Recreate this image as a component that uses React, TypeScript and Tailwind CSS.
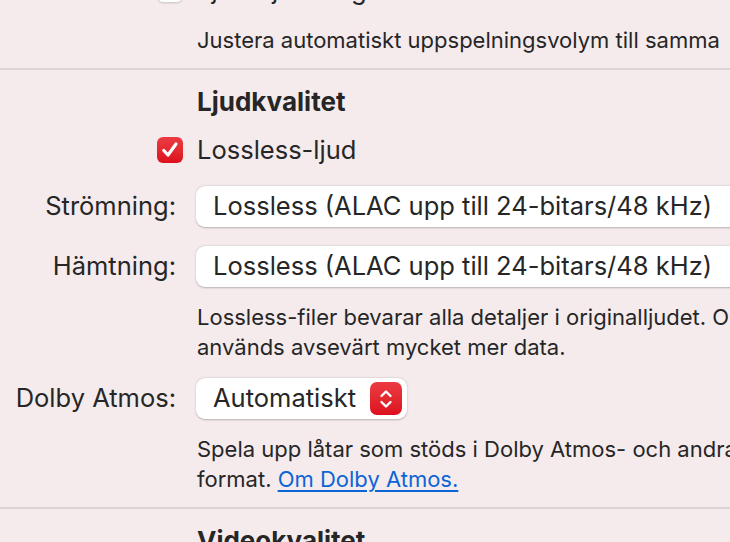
import React from 'react';

// Red macOS-style checkbox
const Checkbox: React.FC<{ checked?: boolean }> = ({ checked = false }) => {
  if (!checked) {
    return <div className="w-[26px] h-[26px] rounded-[6px] bg-white border border-[#d6cfd1] shadow-[0_1px_1px_rgba(0,0,0,0.08)]" />;
  }
  return (
    <div className="w-[26px] h-[26px] rounded-[6px] bg-gradient-to-b from-[#ec3a42] to-[#dc0f1c] flex items-center justify-center">
      <svg width="20" height="20" viewBox="0 0 20 20" fill="none">
        <path d="M3.8 10.5 L8 15 L16 4" stroke="white" strokeWidth="3.2" strokeLinecap="round" strokeLinejoin="round" />
      </svg>
    </div>
  );
};

// Popup button (select)
const Popup: React.FC<{ value: string; stepper?: boolean; full?: boolean }> = ({ value, stepper = false, full = false }) => (
  <div
    className={`h-[41px] flex items-center bg-white rounded-[9px] shadow-[0_0.5px_2px_rgba(0,0,0,0.25)] pl-[17px] ${
      full ? 'w-[560px]' : 'pr-[5px]'
    }`}
  >
    <span className="text-[25.5px] leading-[30px] -mt-[1px] text-[#262626] whitespace-nowrap">{value}</span>
    {stepper && (
      <div className="ml-[14px] w-[32px] h-[33px] rounded-[7px] bg-gradient-to-b from-[#ec3a42] to-[#dc0f1c] flex items-center justify-center">
        <svg width="16" height="24" viewBox="0 0 16 24" fill="none">
          <path d="M3.5 9 L8 4.5 L12.5 9" stroke="white" strokeWidth="2.4" strokeLinecap="round" strokeLinejoin="round" />
          <path d="M3.5 15 L8 19.5 L12.5 15" stroke="white" strokeWidth="2.4" strokeLinecap="round" strokeLinejoin="round" />
        </svg>
      </div>
    )}
  </div>
);

// A label column + control column row
const Row: React.FC<{ label?: React.ReactNode; children: React.ReactNode; className?: string }> = ({
  label,
  children,
  className = '',
}) => (
  <div className={`flex items-center ${className}`}>
    <div className="w-[183px] shrink-0 flex justify-end pr-[7px] -mt-[1px] text-[25.5px] leading-[30px] text-[#262626] whitespace-nowrap">
      {label}
    </div>
    <div className="pl-[13px] flex-1 min-w-0 whitespace-nowrap">{children}</div>
  </div>
);

const App: React.FC = () => {
  return (
    <div
      className="w-[730px] h-[542px] overflow-hidden bg-[#f5ebed] text-[#262626]"
      style={{ fontFamily: 'Inter, "Noto Sans", sans-serif' }}
    >
      {/* Previous section (cut off at top) */}
      <div className="flex items-center -mt-[23px] h-[26px]">
        <div className="w-[183px] flex justify-end">
          <Checkbox />
        </div>
        <span className="pl-[14px] text-[25.5px] leading-[26px]">Ljudutjämning</span>
      </div>
      <div className="pl-[197px] mt-[22px] text-[22px] leading-[30px] whitespace-nowrap">
        Justera automatiskt uppspelningsvolym till samma
      </div>

      <div className="mt-[13px] h-[2px] bg-[#ddd3d5]" />

      {/* Ljudkvalitet */}
      <div className="pl-[197px] mt-[17px] text-[26px] leading-[30px] font-bold">Ljudkvalitet</div>

      <div className="flex items-center mt-[18px] h-[30px]">
        <div className="w-[183px] flex justify-end">
          <Checkbox checked />
        </div>
        <span className="pl-[14px] text-[25.5px] leading-[30px]">Lossless-ljud</span>
      </div>

      <Row label="Strömning:" className="mt-[21px]">
        <Popup value="Lossless (ALAC upp till 24-bitars/48 kHz)" full />
      </Row>
      <Row label="Hämtning:" className="mt-[19px]">
        <Popup value="Lossless (ALAC upp till 24-bitars/48 kHz)" full />
      </Row>

      <div className="pl-[197px] mt-[15px] text-[22px] leading-[30px] whitespace-nowrap">
        <div>Lossless-filer bevarar alla detaljer i originalljudet. Om</div>
        <div>används avsevärt mycket mer data.</div>
      </div>

      <Row label="Dolby Atmos:" className="mt-[16px]">
        <div className="inline-flex">
          <Popup value="Automatiskt" stepper />
        </div>
      </Row>

      <div className="pl-[197px] mt-[15px] text-[22px] leading-[30px] whitespace-nowrap">
        <div>Spela upp låtar som stöds i Dolby Atmos- och andra</div>
        <div>
          format. <span className="text-[#0a66d6] underline underline-offset-[3px]">Om Dolby Atmos.</span>
        </div>
      </div>

      <div className="mt-[13px] h-[2px] bg-[#ddd3d5]" />

      <div className="pl-[197px] mt-[17px] text-[26px] leading-[30px] font-bold">Videokvalitet</div>
    </div>
  );
};

export default App;
